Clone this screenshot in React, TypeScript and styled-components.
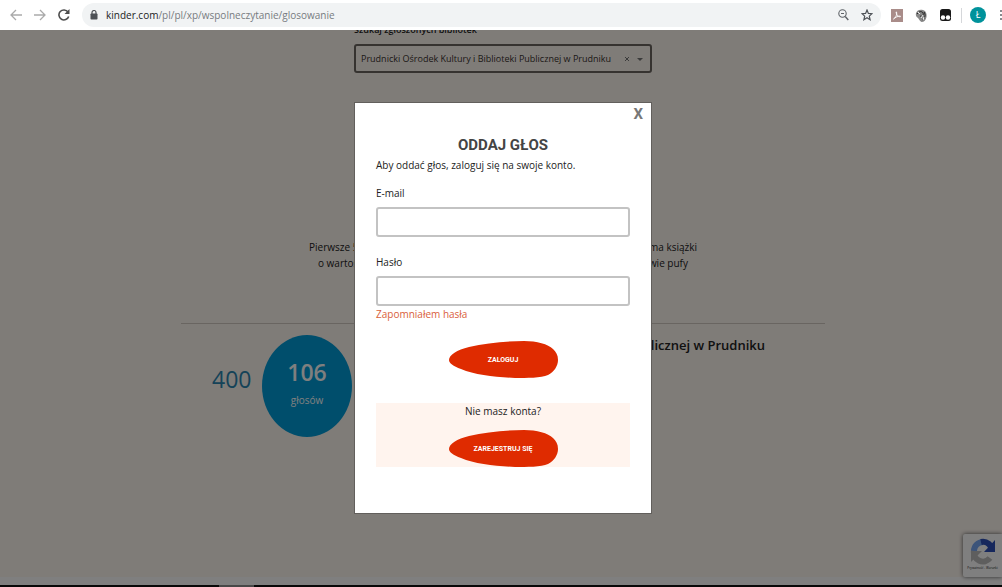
import React from 'react';
import styled, { createGlobalStyle } from 'styled-components';

const BODY_FONT = '"Open Sans", "Noto Sans", sans-serif';
const DISPLAY_FONT = 'Roboto, "Liberation Sans", sans-serif';

const GlobalStyle = createGlobalStyle`
  *, *::before, *::after { box-sizing: border-box; }
  body { margin: 0; font-family: ${BODY_FONT}; font-size: 10px; line-height: 16px; color: #222; }
  button, input, select { font: inherit; color: inherit; }
  p, h1, h2 { margin: 0; }
`;

const Screen = styled.div`
  display: flex;
  flex-direction: column;
  height: 100vh;
  overflow: hidden;
`;

const BrowserBar = styled.header`
  flex: none;
  display: flex;
  align-items: center;
  height: 30px;
  padding-left: 8px;
  background: #fff;
`;

const BarButton = styled.button<{ $width?: number }>`
  flex: none;
  display: flex;
  align-items: center;
  justify-content: center;
  width: ${p => p.$width ?? 24}px;
  height: 24px;
  padding: 0;
  border: 0;
  background: none;
`;

const AddressBar = styled.div`
  flex: 1;
  display: flex;
  align-items: center;
  height: 24px;
  margin-left: 10px;
  padding: 0 2px 0 8px;
  border-radius: 12px;
  background: #f1f3f4;
`;

const Address = styled.p`
  flex: 1;
  margin-left: 8px;
  font-size: 10px;
  color: #777b80;
  white-space: nowrap;
  span { color: #222; }
`;

const Extensions = styled.div`
  display: flex;
  align-items: center;
  padding-left: 4px;
`;

const Divider = styled.span`
  width: 1px;
  height: 15px;
  margin: 0 4px;
  background: #d5d7da;
`;

const Avatar = styled.span`
  display: flex;
  align-items: center;
  justify-content: center;
  width: 16px;
  height: 16px;
  border-radius: 50%;
  background: #00929b;
  color: #fff;
  font-size: 9px;
`;

const Viewport = styled.div`
  position: relative;
  flex: 1;
  min-height: 0;
  overflow: hidden;
`;

const Page = styled.main`
  height: 100%;
  padding-left: 4px;
  background: #fff8f1;
`;

const Search = styled.div`
  width: 298px;
  margin: 0 auto;
  label {
    display: block;
    height: 22px;
    margin-top: -8px;
    font-size: 9px;
    font-weight: 600;
  }
`;

const SelectBox = styled.div`
  display: flex;
  align-items: center;
  height: 29px;
  padding: 0 6px 0 5px;
  border: 2px solid #6c6661;
  border-radius: 3px;
  select {
    flex: 1;
    min-width: 0;
    padding: 0;
    border: 0;
    appearance: none;
    background: none;
    font-size: 9px;
    color: #39332f;
  }
`;

const Lead = styled.div`
  display: flex;
  flex-direction: column;
  align-items: center;
  padding: 166px 0 52px;
`;

const LeadLine = styled.p<{ $width: number }>`
  display: flex;
  justify-content: space-between;
  width: ${p => p.$width}px;
  max-width: 100%;
`;

const Result = styled.section`
  display: flex;
  width: 644px;
  max-width: 100%;
  margin: 0 auto;
  padding: 11px 60px 0 31px;
  border-top: 1px solid #d2cac3;
`;

const Goal = styled.p`
  width: 50px;
  padding-top: 28px;
  font-size: 23px;
  line-height: 32px;
  color: #2b86b0;
`;

const Votes = styled.div`
  display: flex;
  flex-direction: column;
  align-items: center;
  width: 90px;
  height: 102px;
  padding-top: 21px;
  border-radius: 50%;
  background: #009cd8;
  color: #fff;
  strong { font-size: 23px; line-height: 32px; font-weight: 600; }
  span { margin-top: 4px; }
`;

const LibraryName = styled.h2`
  flex: 1;
  font-size: 13px;
  line-height: 20px;
  font-weight: 600;
  text-align: right;
`;

const Captcha = styled.aside`
  position: absolute;
  right: 0;
  bottom: 8px;
  display: flex;
  flex-direction: column;
  align-items: center;
  width: 39px;
  height: 43px;
  padding-top: 4px;
  border-radius: 2px 0 0 2px;
  background: #fff;
  box-shadow: 0 0 4px #555;
  font-size: 3px;
  line-height: 6px;
  white-space: nowrap;
`;

const Overlay = styled.div`
  position: absolute;
  inset: 0;
  display: flex;
  align-items: center;
  justify-content: center;
  padding: 1px 0 0 4px;
  background: rgba(0, 0, 0, 0.5);
`;

const Dialog = styled.div`
  position: relative;
  width: 298px;
  padding: 30px 21px 46px;
  border: 1px solid #625f5c;
  background: #fff;
`;

const CloseButton = styled.button`
  position: absolute;
  top: 2px;
  right: 8px;
  padding: 0;
  border: 0;
  background: none;
  font-family: ${DISPLAY_FONT};
  font-size: 15px;
  line-height: 18px;
  font-weight: 700;
  color: #777;
`;

const Title = styled.h1`
  font-family: ${DISPLAY_FONT};
  font-size: 15px;
  line-height: 24px;
  font-weight: 700;
  text-align: center;
  color: #444;
`;

const Field = styled.div`
  margin-top: 12px;
  & + & { margin-top: 17px; }
  label { display: block; margin-bottom: 6px; }
  input {
    display: block;
    width: 100%;
    height: 30px;
    padding: 0 8px;
    border: 2px solid #c3c3c3;
    border-radius: 3px;
    background: #fff;
  }
`;

const ForgotLink = styled.a`
  display: block;
  color: #d9603b;
  text-decoration: none;
`;

const BlobButton = styled.button`
  position: relative;
  display: flex;
  align-items: center;
  justify-content: center;
  width: 109px;
  height: 37px;
  margin: 0 auto;
  padding: 0;
  border: 0;
  background: none;
  color: #fff;
  font-family: ${DISPLAY_FONT};
  font-size: 7px;
  font-weight: 700;
  svg { position: absolute; inset: 0; }
  span { position: relative; }
`;

const LoginRow = styled.div`
  padding: 19px 0 25px;
`;

const Register = styled.div`
  background: #fff4ee;
  p { padding-bottom: 11px; text-align: center; }
`;

const Taskbar = styled.footer`
  flex: none;
  height: 2px;
  padding-left: 219px;
  background: #080808;
  span { display: block; width: 35px; height: 2px; background: #484848; }
`;

const Blob = () => (
  <svg width="109" height="37" viewBox="0 0 109 37" aria-hidden="true">
    <path d="M0 19C0 14 8 9 20 6C37 2 58 0 75 0C88 0 99 3 104 8C107 11 109 14 109 19C109 25 105 31 99 34C92 37 78 37 66 37C47 36 26 34 12 28C4 25 0 22 0 19Z" fill="#df2b00" />
  </svg>
);

const Arrow = ({ flip }: { flip?: boolean }) => (
  <svg width="12" height="12" viewBox="0 0 12 12" fill="none" stroke="#aaa" strokeWidth="1.3">
    <path d={flip ? 'M0 6H11M6 1L11 6L6 11' : 'M12 6H1M6 1L1 6L6 11'} />
  </svg>
);

export default function App() {
  return (
    <Screen>
      <GlobalStyle />
      <BrowserBar>
        <BarButton $width={16} aria-label="Wstecz"><Arrow /></BarButton>
        <BarButton $width={32} aria-label="Dalej"><Arrow flip /></BarButton>
        <BarButton $width={16} aria-label="Odśwież">
          <svg width="12" height="12" viewBox="0 0 12 12">
            <path d="M10 3A5 5 0 1 0 10.700 7.500" fill="none" stroke="#4d4d4d" strokeWidth="1.600" />
            <path d="M11.500 0V5H6.500Z" fill="#4d4d4d" />
          </svg>
        </BarButton>
        <AddressBar>
          <svg width="8" height="10" viewBox="0 0 8 10">
            <path d="M2 4V2.500a2 2 0 0 1 4 0V4" fill="none" stroke="#4d5156" strokeWidth="1.200" />
            <rect x="0.500" y="3.500" width="7" height="6" rx="0.800" fill="#4d5156" />
          </svg>
          <Address><span>kinder.com</span>/pl/pl/xp/wspolneczytanie/glosowanie</Address>
          <BarButton aria-label="Powiększenie">
            <svg width="11" height="12" viewBox="0 0 11 12" fill="none" stroke="#5f6368">
              <circle cx="4.500" cy="4.500" r="3.700" strokeWidth="1.100" />
              <path d="M3 4.500H6" />
              <path d="M7.200 7.500L10.300 11" strokeWidth="1.400" />
            </svg>
          </BarButton>
          <BarButton aria-label="Dodaj do zakładek">
            <svg width="12" height="12" viewBox="0 0 12 12" fill="none" stroke="#4d5156" strokeWidth="1.200">
              <path d="M6 1L7.400 4.400L11 4.700L8.300 7.100L9.100 10.700L6 8.800L2.900 10.700L3.700 7.100L1 4.700L4.600 4.400Z" />
            </svg>
          </BarButton>
        </AddressBar>
        <Extensions>
          <BarButton aria-label="Adobe Acrobat">
            <svg width="12" height="13" viewBox="0 0 12 13">
              <rect width="12" height="13" fill="#a98c89" />
              <path d="M2.500 10C4 9.500 6.500 5.500 5.500 3C4.800 2 5 5 6.500 6.500C8 8 9.500 8 9.700 7.400C9.500 6.500 5 7.500 2.500 10" fill="none" stroke="#fff" strokeWidth="0.900" />
            </svg>
          </BarButton>
          <BarButton aria-label="Gnu">
            <svg width="12" height="13" viewBox="0 0 12 13">
              <path d="M1 4C2 1 5 0 8 1C11 2 12 5 11.500 8C11 11 9 13 6.500 13C5 12 4 10.500 3 9C1 8 0.500 6 1 4Z" fill="#888" />
              <path d="M2 5C4 2 7 2 8 4C9 6 7 8 5 7M9 3C11 6 10 9 7 11" fill="none" stroke="#222" />
              <path d="M3 3L5 5M8 6L6 9M9 8L8 11" stroke="#eee" />
            </svg>
          </BarButton>
          <BarButton aria-label="Tampermonkey">
            <svg width="11" height="12" viewBox="0 0 11 12">
              <rect width="11" height="12" rx="2.500" fill="#191919" />
              <circle cx="3" cy="8.500" r="2.200" fill="#fff" />
              <circle cx="8" cy="8.500" r="2.200" fill="#fff" />
            </svg>
          </BarButton>
          <Divider />
          <BarButton aria-label="Profil"><Avatar>Ł</Avatar></BarButton>
          <BarButton $width={12} aria-label="Menu">
            <svg width="12" height="12" viewBox="0 0 12 12" fill="#5f6368">
              <circle cx="11" cy="2" r="1" /><circle cx="11" cy="6" r="1" /><circle cx="11" cy="10" r="1" />
            </svg>
          </BarButton>
        </Extensions>
      </BrowserBar>

      <Viewport>
        <Page>
          <Search>
            <label htmlFor="library">Szukaj zgłoszonych bibliotek</label>
            <SelectBox>
              <select id="library">
                <option>Prudnicki Ośrodek Kultury i Biblioteki Publicznej w Prudniku</option>
              </select>
              <svg width="20" height="8" viewBox="0 0 20 8">
                <path d="M1 2L5 6M5 2L1 6" stroke="#777" />
                <path d="M13 3H19L16 6Z" fill="#777" />
              </svg>
            </SelectBox>
          </Search>
          <Lead>
            <LeadLine $width={388}><span>Pierwsze 5</span><span>ma książki</span></LeadLine>
            <LeadLine $width={370}><span>o wartoś</span><span>wie pufy</span></LeadLine>
          </Lead>
          <Result>
            <Goal>400</Goal>
            <Votes><strong>106</strong><span>głosów</span></Votes>
            <LibraryName>Publicznej w Prudniku</LibraryName>
          </Result>
          <Captcha>
            <svg width="26" height="27" viewBox="0 0 26 27" fill="none" strokeWidth="6">
              <path d="M4 13A9 9 0 0 1 13 4" stroke="#79a8f5" />
              <path d="M11 4A9 9 0 0 1 22 13" stroke="#2c4fb8" />
              <path d="M25 2V14H14Z" fill="#2c4fb8" />
              <path d="M4 13A9 9 0 0 0 20 20" stroke="#bdbdbd" />
              <path d="M1 24V13H12Z" fill="#bdbdbd" />
            </svg>
            <span>Prywatność - Warunki</span>
          </Captcha>
        </Page>

        <Overlay>
          <Dialog role="dialog" aria-modal="true" aria-labelledby="dialog-title">
            <CloseButton aria-label="Zamknij">X</CloseButton>
            <Title id="dialog-title">ODDAJ GŁOS</Title>
            <p>Aby oddać głos, zaloguj się na swoje konto.</p>
            <form onSubmit={e => e.preventDefault()}>
              <Field>
                <label htmlFor="email">E-mail</label>
                <input id="email" type="email" />
              </Field>
              <Field>
                <label htmlFor="password">Hasło</label>
                <input id="password" type="password" />
              </Field>
              <ForgotLink href="#haslo">Zapomniałem hasła</ForgotLink>
              <LoginRow>
                <BlobButton type="submit"><Blob /><span>ZALOGUJ</span></BlobButton>
              </LoginRow>
            </form>
            <Register>
              <p>Nie masz konta?</p>
              <BlobButton type="button"><Blob /><span>ZAREJESTRUJ SIĘ</span></BlobButton>
            </Register>
          </Dialog>
        </Overlay>
      </Viewport>
      <Taskbar><span /></Taskbar>
    </Screen>
  );
}
